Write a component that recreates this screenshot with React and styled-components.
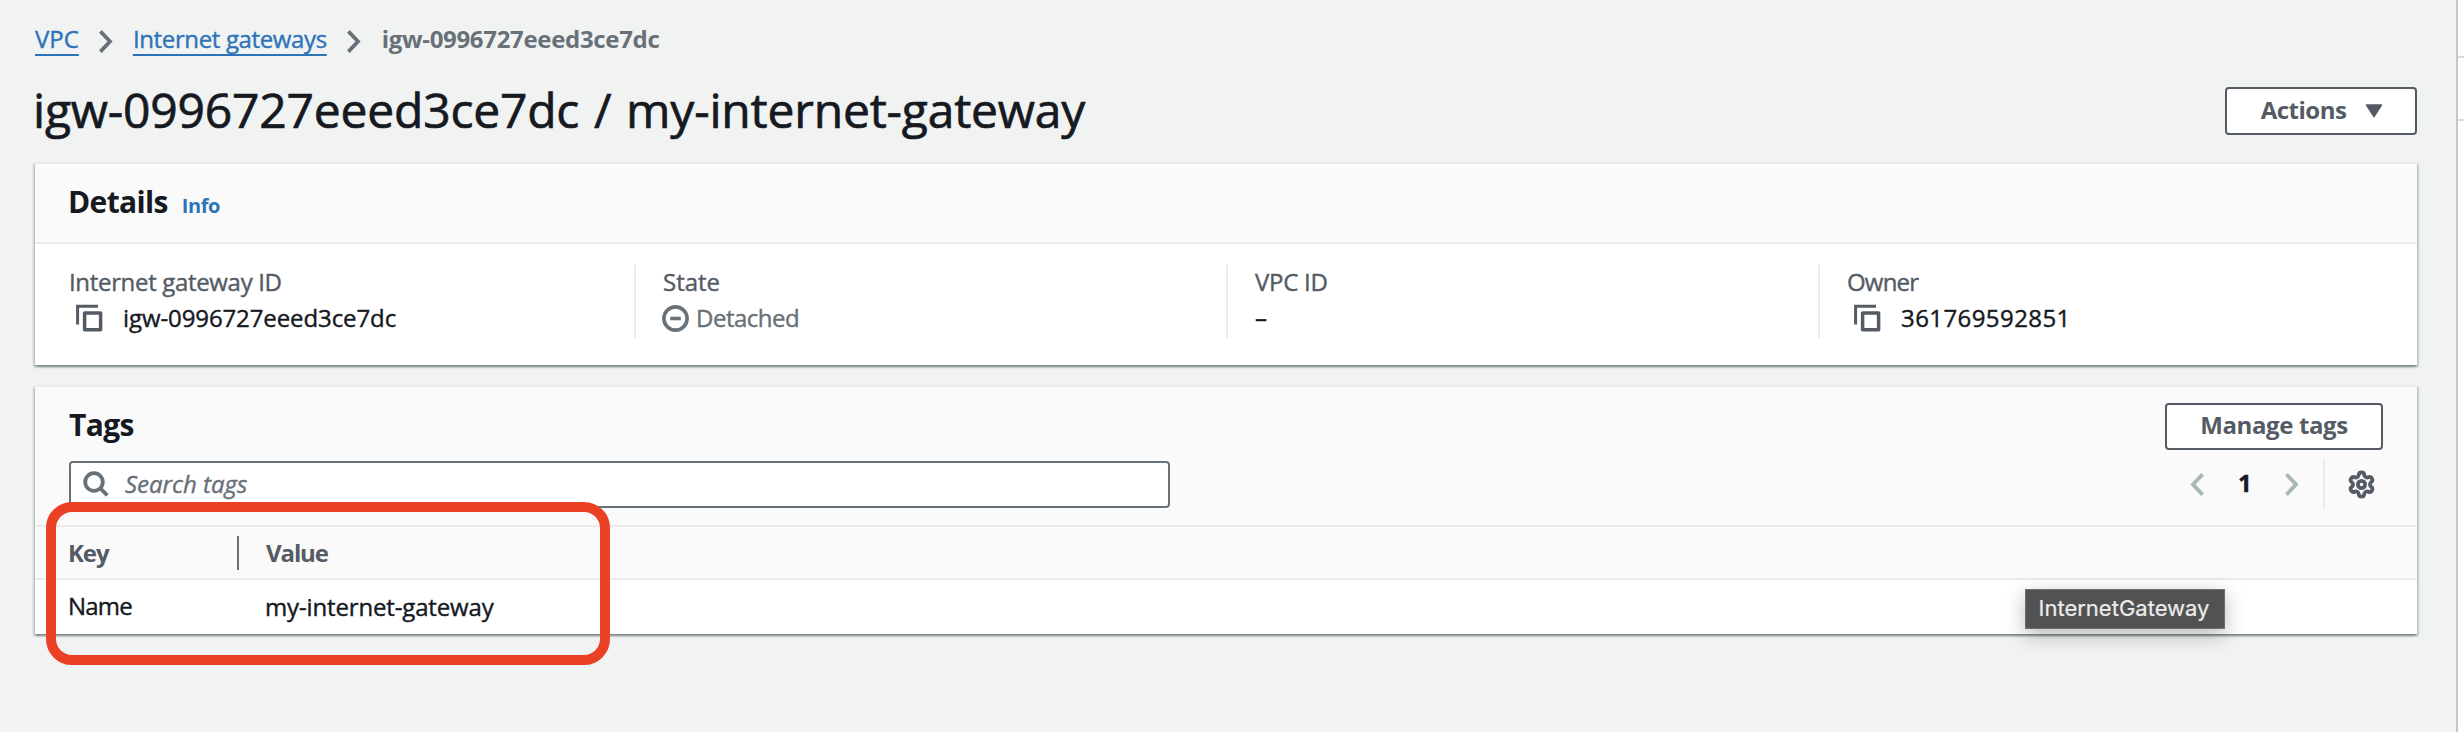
import React from 'react';
import styled, { createGlobalStyle } from 'styled-components';
import { Settings } from 'lucide-react';

const color = {
  page: '#f1f3f3',
  text: '#16191f',
  label: '#545b64',
  muted: '#687078',
  link: '#2e73b8',
  line: '#ebebeb',
  header: '#fafafa',
  disabled: '#aab7b8',
  highlight: '#ea4025',
};

const GlobalStyle = createGlobalStyle`
  * { box-sizing: border-box; }
  body {
    margin: 0;
    background: ${color.page};
    color: ${color.text};
    font: 400 24px "Open Sans", "Noto Sans", sans-serif;
    -webkit-text-stroke-width: 0.4px;
  }
  svg { display: block; flex: none; }
`;

const Page = styled.div`
  position: relative;
  display: flex;
  width: 2464px;
  height: 732px;
  overflow: hidden;
`;

const Content = styled.main`
  flex: 1;
  padding: 17px 39px 0 35px;
`;

const SidePanel = styled.aside`
  width: 8px;
  border-left: 2px solid #c3c8cf;
  background: #fff;
`;

const SidePanelSection = styled.div`
  height: ${(p) => p.$height}px;
  border-bottom: 2px solid #d5dbdb;
`;

const Text = styled.span`
  letter-spacing: ${(p) => p.$spacing || 0}px;
  white-space: nowrap;
`;

const Breadcrumbs = styled.nav`
  display: flex;
  align-items: flex-start;
  height: 44px;
  line-height: 44px;
`;

const BreadcrumbLink = styled.a`
  color: ${color.link};
  letter-spacing: ${(p) => p.$spacing || 0}px;
  text-decoration: underline 2px;
  text-underline-offset: 6px;
  white-space: nowrap;
`;

const BreadcrumbSeparator = styled.span`
  margin: 13px 20px 0;
`;

const BreadcrumbCurrent = styled.span`
  padding-left: 1px;
  color: ${color.muted};
  font-weight: 700;
  letter-spacing: -0.32px;
  -webkit-text-stroke-width: 0;
`;

const TitleRow = styled.div`
  display: flex;
  justify-content: space-between;
  height: 60px;
  margin-top: 18px;
`;

const Title = styled.h1`
  margin: 1px 0 0 -2px;
  font-size: 48px;
  font-weight: 400;
  line-height: 60px;
  letter-spacing: -0.2px;
  word-spacing: 2.5px;
  -webkit-text-stroke-width: 0.7px;
`;

const Button = styled.button`
  display: flex;
  align-items: center;
  justify-content: center;
  gap: 19px;
  width: ${(p) => p.$width}px;
  height: ${(p) => p.$height}px;
  margin-top: ${(p) => p.$offset || 0}px;
  padding: 0 0 4px ${(p) => p.$shift || 0}px;
  border: 2px solid ${color.label};
  border-radius: 4px;
  background: #fff;
  color: ${color.label};
  font: inherit;
  font-weight: 700;
  letter-spacing: ${(p) => p.$spacing}px;
  -webkit-text-stroke-width: 0;

  svg {
    margin-top: 3px;
  }
`;

const Card = styled.section`
  margin-top: ${(p) => p.$gap}px;
  border-top: 2px solid ${color.line};
  background: #fff;
  box-shadow: 0 2px 2px 0 rgba(0, 28, 36, 0.3), 2px 2px 2px 0 rgba(0, 28, 36, 0.15),
    -2px 2px 2px 0 rgba(0, 28, 36, 0.15);
`;

const DetailsHeader = styled.header`
  display: flex;
  align-items: baseline;
  gap: 14px;
  height: 80px;
  padding: 16px 34px 0 33px;
  border-bottom: 2px solid ${color.line};
  background: ${color.header};
`;

const Heading = styled.h2`
  margin: 0;
  font-size: 30px;
  font-weight: 700;
  line-height: 43px;
  letter-spacing: -0.65px;
  -webkit-text-stroke-width: 0;
`;

const InfoLink = styled.a`
  color: ${color.link};
  font-size: 20px;
  font-weight: 700;
  letter-spacing: -0.4px;
  -webkit-text-stroke-width: 0;
`;

const DetailsGrid = styled.div`
  display: grid;
  grid-template-columns: 599px 592px 592px 1fr;
  height: 121px;
  padding-top: 21px;
`;

const DetailItem = styled.div`
  height: 73px;
  padding-left: 26px;
  border-left: 2px solid ${color.line};

  &:first-child {
    padding-left: 33px;
    border-left: 0;
  }
`;

const DetailLabel = styled.div`
  padding-left: 1px;
  color: ${color.label};
  line-height: 34px;
  letter-spacing: ${(p) => p.$spacing || 0}px;
`;

const DetailValue = styled.div`
  display: flex;
  align-items: center;
  gap: ${(p) => p.$gap || 0}px;
  padding-left: ${(p) => p.$indent || 0}px;
  color: ${(p) => (p.$muted ? color.muted : color.text)};
  line-height: 38px;
`;

const TagsHeader = styled.header`
  height: 140px;
  padding: 16px 34px 0;
  border-bottom: 2px solid ${color.line};
  background: ${color.header};
`;

const HeaderRow = styled.div`
  display: flex;
  align-items: flex-start;
  justify-content: space-between;
`;

const ToolRow = styled.div`
  display: flex;
  align-items: flex-end;
  justify-content: space-between;
  height: 48px;
  margin-top: 10px;
`;

const SearchBox = styled.div`
  display: flex;
  align-items: center;
  gap: 16px;
  width: 1101px;
  height: 47px;
  padding: 0 12px 2px;
  border: 2px solid ${color.muted};
  border-radius: 4px;
  background: #fff;
  color: ${color.muted};
  font-style: italic;
`;

const Pagination = styled.div`
  display: flex;
  align-items: center;
  height: 48px;
`;

const PageNumber = styled.span`
  width: 14px;
  margin: 0 33px 3px 34px;
  font-weight: 700;
`;

const SettingsCell = styled.div`
  display: flex;
  align-items: center;
  height: 48px;
  margin-left: 24px;
  padding: 0 7px 0 22px;
  border-left: 2px solid ${color.line};
`;

const TableRow = styled.div`
  display: flex;
  align-items: center;
  height: ${(p) => (p.$head ? 53 : 54)}px;
  padding-bottom: ${(p) => (p.$head ? 0 : 2)}px;
  border-bottom: ${(p) => (p.$head ? `2px solid ${color.line}` : 0)};
  background: ${(p) => (p.$head ? color.header : '#fff')};
  color: ${(p) => (p.$head ? color.label : color.text)};
  font-weight: ${(p) => (p.$head ? 700 : 400)};
  -webkit-text-stroke-width: ${(p) => (p.$head ? 0 : 0.4)}px;
`;

const KeyCell = styled.div`
  width: 204px;
  height: 34px;
  padding-left: 33px;
  border-right: 2px solid ${(p) => (p.$divided ? color.muted : 'transparent')};
  line-height: 34px;
`;

const ValueCell = styled.div`
  padding-left: ${(p) => p.$indent}px;
`;

const Highlight = styled.div`
  position: absolute;
  left: 46px;
  top: 502px;
  width: 564px;
  height: 163px;
  border: 10px solid ${color.highlight};
  border-radius: 26px;
`;

const Tooltip = styled.div`
  position: absolute;
  left: 2025px;
  top: 589px;
  width: 200px;
  height: 40px;
  border: 1px solid #6e6e6e;
  background: #525252;
  box-shadow: 0 6px 20px rgba(0, 0, 0, 0.28);
  color: #ececec;
  font: 400 22px/37px Inter, Roboto, sans-serif;
  text-align: center;
  text-indent: -2px;
  -webkit-text-stroke-width: 0.2px;
`;

const Chevron = ({ left, stroke = color.muted }) => (
  <svg width="14" height="23" viewBox="0 0 14 23" fill="none" stroke={stroke} strokeWidth="3.8">
    <path d={left ? 'M12.6 1.4 3 11.5l9.6 10.1' : 'M1.4 1.4 11 11.5 1.4 21.6'} />
  </svg>
);

const CopyIcon = () => (
  <svg width="28" height="28" viewBox="0 0 28 28" fill="none" stroke={color.label} strokeWidth="3.5">
    <path d="M2.6 20.5V2.2H23" strokeWidth="3" />
    <rect x="9.6" y="8.9" width="16" height="16.8" strokeLinejoin="round" />
  </svg>
);

const DetachedIcon = () => (
  <svg width="27" height="27" viewBox="0 0 27 27" fill="none" stroke={color.muted} strokeWidth="3.6">
    <circle cx="13.5" cy="13.5" r="11.6" />
    <path d="M8.2 13.5h10.6" />
  </svg>
);

const SearchIcon = () => (
  <svg width="26" height="26" viewBox="0 0 26 26" fill="none" stroke={color.muted} strokeWidth="3.8">
    <circle cx="11" cy="11" r="8.8" />
    <path d="M17 17l7.3 7.3" />
  </svg>
);

const CaretIcon = () => (
  <svg width="18" height="14" viewBox="0 0 18 14">
    <path
      d="M1.6 1h14.8L9 12.6z"
      fill={color.label}
      stroke={color.label}
      strokeWidth="1.6"
      strokeLinejoin="round"
    />
  </svg>
);

export default function App() {
  return (
    <Page>
      <GlobalStyle />
      <Content>
        <Breadcrumbs>
          <BreadcrumbLink>VPC</BreadcrumbLink>
          <BreadcrumbSeparator>
            <Chevron />
          </BreadcrumbSeparator>
          <BreadcrumbLink $spacing={-0.36}>Internet gateways</BreadcrumbLink>
          <BreadcrumbSeparator>
            <Chevron />
          </BreadcrumbSeparator>
          <BreadcrumbCurrent>igw-0996727eeed3ce7dc</BreadcrumbCurrent>
        </Breadcrumbs>

        <TitleRow>
          <Title>igw-0996727eeed3ce7dc / my-internet-gateway</Title>
          <Button $width={192} $height={48} $offset={8} $spacing={-0.5} $shift={2}>
            Actions
            <CaretIcon />
          </Button>
        </TitleRow>

        <Card $gap={23}>
          <DetailsHeader>
            <Heading>Details</Heading>
            <InfoLink>Info</InfoLink>
          </DetailsHeader>
          <DetailsGrid>
            <DetailItem>
              <DetailLabel $spacing={-0.33}>Internet gateway ID</DetailLabel>
              <DetailValue $gap={20} $indent={7}>
                <CopyIcon />
                <Text $spacing={-0.1}>igw-0996727eeed3ce7dc</Text>
              </DetailValue>
            </DetailItem>
            <DetailItem>
              <DetailLabel>State</DetailLabel>
              <DetailValue $gap={7} $muted>
                <DetachedIcon />
                <Text $spacing={-0.5}>Detached</Text>
              </DetailValue>
            </DetailItem>
            <DetailItem>
              <DetailLabel $spacing={-0.25}>VPC ID</DetailLabel>
              <DetailValue $indent={1}>–</DetailValue>
            </DetailItem>
            <DetailItem>
              <DetailLabel $spacing={-0.8}>Owner</DetailLabel>
              <DetailValue $gap={20} $indent={7}>
                <CopyIcon />
                <Text $spacing={0.42}>361769592851</Text>
              </DetailValue>
            </DetailItem>
          </DetailsGrid>
        </Card>

        <Card $gap={20}>
          <TagsHeader>
            <HeaderRow>
              <Heading>Tags</Heading>
              <Button $width={218} $height={47} $spacing={-0.38}>
                Manage tags
              </Button>
            </HeaderRow>
            <ToolRow>
              <SearchBox>
                <SearchIcon />
                <Text>Search tags</Text>
              </SearchBox>
              <Pagination>
                <Chevron left stroke={color.disabled} />
                <PageNumber>1</PageNumber>
                <Chevron stroke={color.disabled} />
                <SettingsCell>
                  <Settings size={29} strokeWidth={3.1} color={color.label} />
                </SettingsCell>
              </Pagination>
            </ToolRow>
          </TagsHeader>
          <TableRow $head>
            <KeyCell $divided>
              <Text $spacing={-1.1}>Key</Text>
            </KeyCell>
            <ValueCell $indent={27}>
              <Text $spacing={-1.1}>Value</Text>
            </ValueCell>
          </TableRow>
          <TableRow>
            <KeyCell>
              <Text $spacing={-0.8}>Name</Text>
            </KeyCell>
            <ValueCell $indent={26}>
              <Text $spacing={-0.15}>my-internet-gateway</Text>
            </ValueCell>
          </TableRow>
        </Card>
      </Content>

      <SidePanel>
        <SidePanelSection $height={58} />
        <SidePanelSection $height={63} />
      </SidePanel>

      <Highlight />
      <Tooltip>InternetGateway</Tooltip>
    </Page>
  );
}
